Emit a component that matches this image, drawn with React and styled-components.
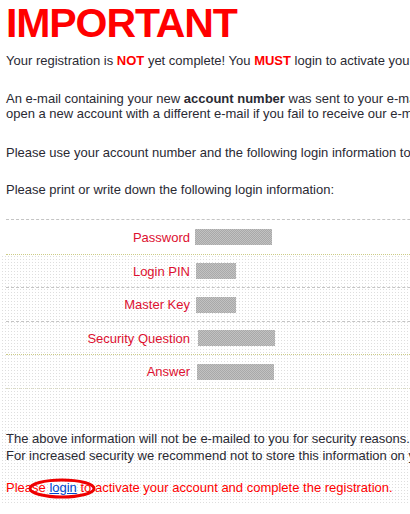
import React from 'react';
import styled, { createGlobalStyle } from 'styled-components';

const GlobalStyle = createGlobalStyle`
  html, body {
    margin: 0;
    padding: 0;
    background: #fff;
    overflow: hidden;
  }
  body {
    font-family: Arial, "Liberation Sans", sans-serif;
    font-size: 13px;
    color: #2a2a33;
  }
`;

const Page = styled.div`
  width: 410px;
  overflow: hidden;
  padding-top: 3px;
`;

const Title = styled.h1`
  margin: 0 0 0 6px;
  font-size: 41px;
  line-height: 40px;
  letter-spacing: -1.1px;
  font-weight: bold;
  color: #ff0000;
`;

const Para = styled.p`
  margin: ${props => props.top || 0}px 0 0 ${props => (props.flush ? 0 : 6)}px;
  line-height: ${props => props.lh || 15}px;
  white-space: nowrap;
  color: ${props => (props.alert ? '#ff0000' : 'inherit')};
`;

const Shout = styled.b`
  color: #ff0000;
`;

const InfoTable = styled.div`
  margin: ${props => (props.first ? 22 : 0)}px 0 0 6px;
  width: 600px;
`;

const Row = styled.div`
  display: grid;
  grid-template-columns: 184px 1fr;
  column-gap: 5px;
  align-items: center;
  height: ${props => props.h || 33}px;
  border-top: 1px ${props => (props.dotted ? 'dotted #cccc88' : 'dashed #c4c4c4')};
`;

const Label = styled.div`
  text-align: right;
  color: #dd1030;
  white-space: nowrap;
`;

const Redacted = styled.div`
  width: ${props => props.w}px;
  height: 16px;
  margin-left: ${props => props.shift || 0}px;
  background: repeating-conic-gradient(#a9a9a9 0 25%, #c2c2c2 0 50%) 0 0 / 2px 2px;
`;

const Dotted = styled.div`
  background-image: linear-gradient(to right, #fff 2px, transparent 2px),
    linear-gradient(to bottom, #fff 2px, #dedede 2px);
  background-size: 3px 3px;
  padding-bottom: 8px;
`;

const Footer = styled.div`
  border-top: 1px dotted #d8d8c0;
  margin-left: 6px;
  padding-top: 41px;
`;

const LinkWrap = styled.span`
  position: relative;
  display: inline-block;
`;

const Link = styled.a`
  color: #0044cc;
  text-decoration: underline;
`;

const Ring = styled.svg`
  position: absolute;
  left: -21px;
  top: -2px;
  pointer-events: none;
`;

const rows = [
  { label: 'Password', w: 77, shift: 0, dotted: false, h: 34 },
  { label: 'Login PIN', w: 40, shift: 1, dotted: true, h: 32 },
  { label: 'Master Key', w: 40, shift: 1, dotted: false, h: 33 },
  { label: 'Security Question', w: 77, shift: 3, dotted: false, h: 32 },
  { label: 'Answer', w: 77, shift: 2, dotted: true, h: 33 },
];

const InfoRow = ({ label, w, shift, dotted, h }) => (
  <Row dotted={dotted} h={h}>
    <Label>{label}</Label>
    <Redacted w={w} shift={shift} />
  </Row>
);

const App = () => (
  <Page>
    <GlobalStyle />
    <Title>IMPORTANT</Title>
    <Para top={10}>
      Your registration is <Shout>NOT</Shout> yet complete! You <Shout>MUST</Shout> login to
      activate your account.
    </Para>
    <Para top={23}>
      An e-mail containing your new <b>account number</b> was sent to your e-mail address. Please
      check your inbox or
      <br />
      open a new account with a different e-mail if you fail to receive our e-mail.
    </Para>
    <Para top={24}>
      Please use your account number and the following login information to log in.
    </Para>
    <Para top={22}>Please print or write down the following login information:</Para>

    <InfoTable first>
      <InfoRow {...rows[0]} />
    </InfoTable>
    <Dotted>
      <InfoTable>
        {rows.slice(1).map(r => (
          <InfoRow key={r.label} {...r} />
        ))}
      </InfoTable>
      <Footer>
        <Para flush lh={17}>
          The above information will not be e-mailed to you for security reasons.
          <br />
          For increased security we recommend not to store this information on your computer.
        </Para>
        <Para flush top={16} alert>
          Please{' '}
          <LinkWrap>
            <Link href="#">login</Link>
            <Ring width="68" height="21" viewBox="0 0 68 21">
              <ellipse cx="34" cy="10.5" rx="32" ry="8.5" fill="none" stroke="#ee0000" strokeWidth="3" />
            </Ring>
          </LinkWrap>{' '}
          to activate your account and complete the registration.
        </Para>
      </Footer>
    </Dotted>
  </Page>
);

export default App;
